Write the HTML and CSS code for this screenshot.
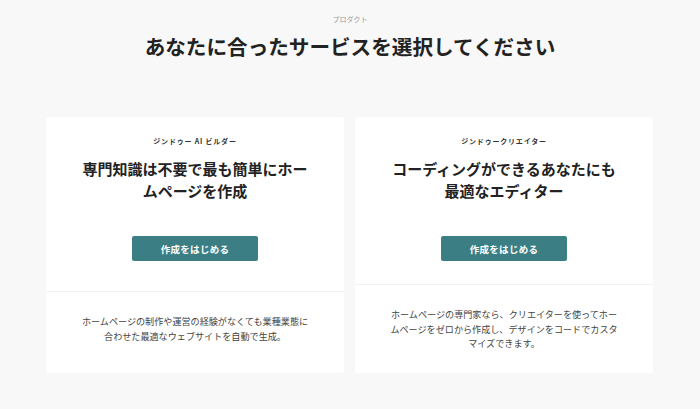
FILE: index.html
```html
<!DOCTYPE html>
<html lang="ja">
<head>
<meta charset="utf-8">
<link rel="stylesheet" href="styles.css">
</head>
<body>
<main class="page">
  <header class="intro">
    <p class="eyebrow">プロダクト</p>
    <h1 class="title">あなたに合ったサービスを選択してください</h1>
  </header>
  <section class="cards">
    <article class="card">
      <div class="card-top card-top--a">
        <p class="card-label">ジンドゥー AI ビルダー</p>
        <h2 class="card-heading">専門知識は不要で最も簡単にホームページを作成</h2>
        <a class="btn" href="#">作成をはじめる</a>
      </div>
      <div class="card-body">
        <p>ホームページの制作や運営の経験がなくても業種業態に合わせた最適なウェブサイトを自動で生成。</p>
      </div>
    </article>
    <article class="card">
      <div class="card-top card-top--b">
        <p class="card-label">ジンドゥークリエイター</p>
        <h2 class="card-heading">コーディングができるあなたにも<br>最適なエディター</h2>
        <a class="btn" href="#">作成をはじめる</a>
      </div>
      <div class="card-body">
        <p>ホームページの専門家なら、クリエイターを使ってホームページをゼロから作成し、デザインをコードでカスタマイズできます。</p>
      </div>
    </article>
  </section>
</main>
</body>
</html>
```

FILE: styles.css
```css
* { box-sizing: border-box; }
html, body {
  margin: 0;
  padding: 0;
  background: #f8f8f8;
  font-family: "Noto Sans CJK JP", "Noto Sans", sans-serif;
  color: #222;
}
.page {
  width: 700px;
  height: 409px;
  overflow: hidden;
}
.intro {
  padding-top: 14px;
  text-align: center;
}
.eyebrow {
  margin: 0;
  font-size: 7px;
  line-height: 10px;
  color: #999;
}
.title {
  margin: 7px 0 0;
  font-size: 20.6px;
  line-height: 30px;
  font-weight: 700;
  color: #222;
  letter-spacing: 0;
}
.cards {
  display: grid;
  grid-template-columns: 298px 298px;
  gap: 11px;
  margin: 56px 0 0 46px;
}
.card {
  background: #fff;
  display: flex;
  flex-direction: column;
  border-radius: 2px;
}
.card-top {
  padding: 19px 30px 23px;
  text-align: center;
  border-bottom: 1px solid #f2f2f2;
}
.card-top--a { padding-bottom: 30px; }
.card-label {
  margin: 0;
  font-size: 7px;
  line-height: 10px;
  font-weight: 700;
  letter-spacing: 0.8px;
  color: #333;
}
.card-heading {
  margin: 12px 0 0;
  font-size: 15px;
  line-height: 22px;
  font-weight: 700;
  color: #222;
}
.btn {
  display: flex;
  align-items: center;
  justify-content: center;
  width: 126px;
  height: 25px;
  margin: 34px auto 0;
  background: #3b7f85;
  color: #fff;
  border-radius: 2px;
  font-size: 9.5px;
  font-weight: 700;
  text-decoration: none;
  letter-spacing: 0.3px;
}
.card-body {
  flex: 1;
  padding: 22px 32px 22px;
  text-align: center;
}
.card-body p {
  margin: 0;
  font-size: 9.1px;
  line-height: 14.5px;
  color: #444;
}
```
